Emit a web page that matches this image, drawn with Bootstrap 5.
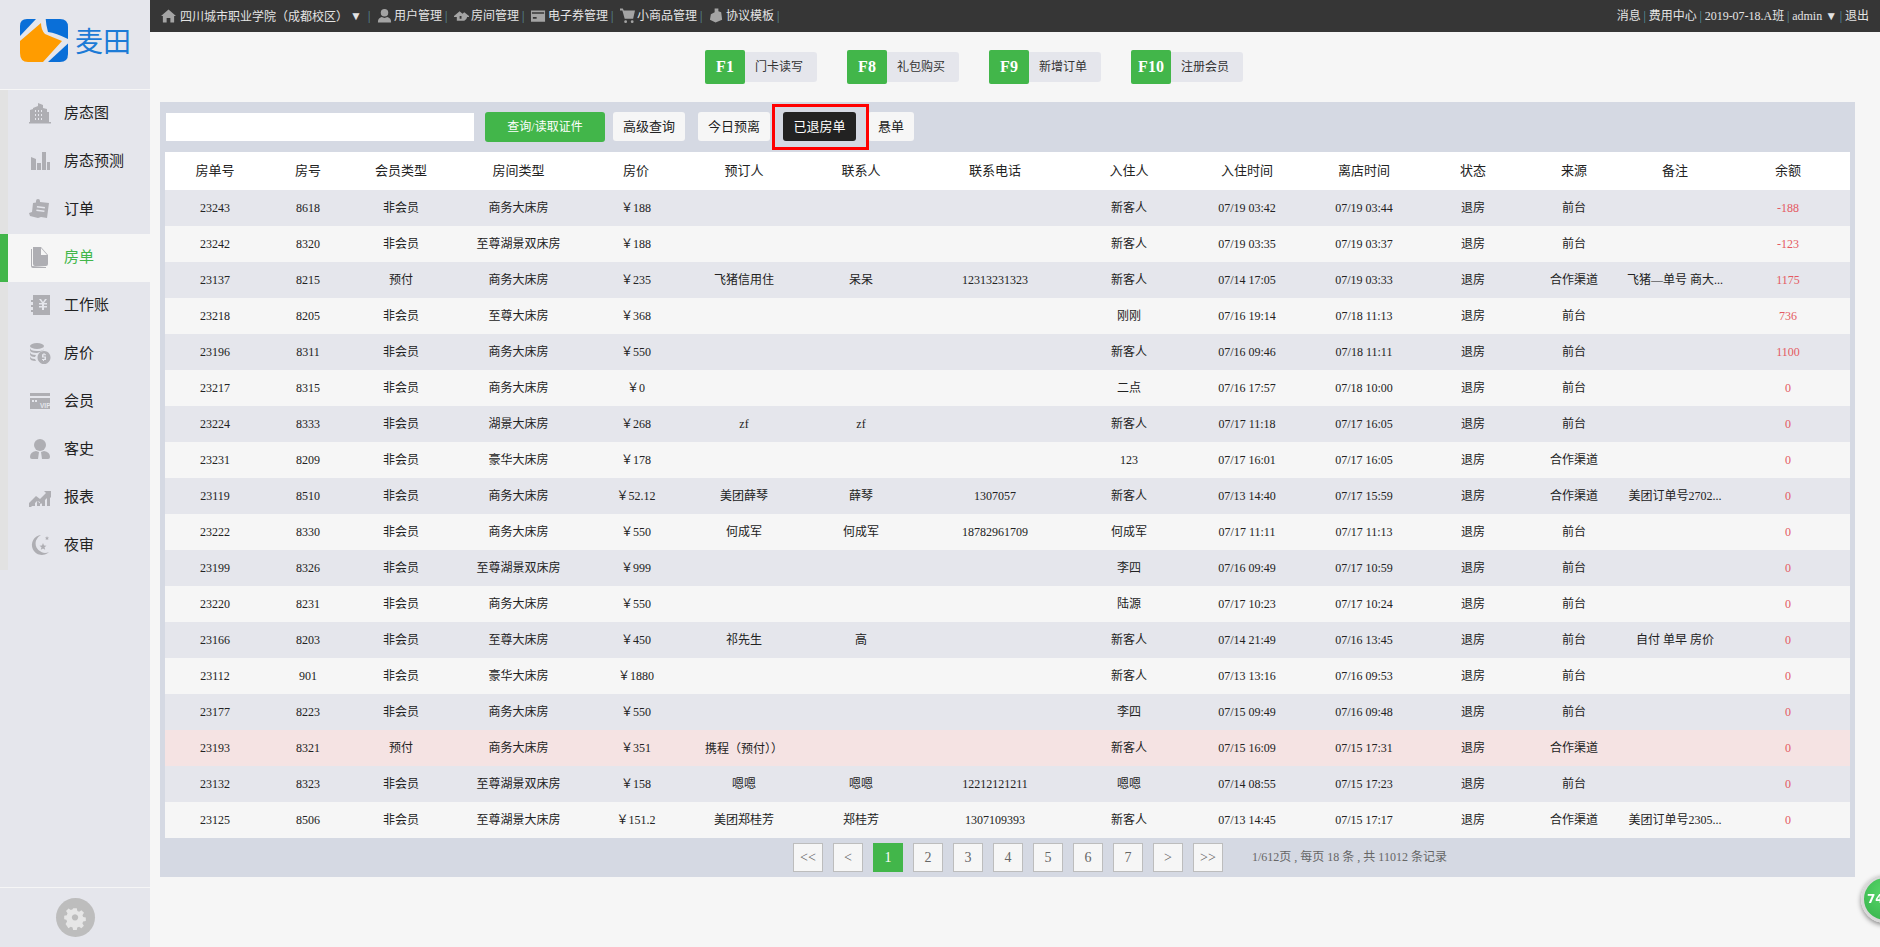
<!DOCTYPE html>
<html lang="zh-CN">
<head>
<meta charset="utf-8">
<title>麦田</title>
<link href="https://cdn.jsdelivr.net/npm/bootstrap@5.3.0/dist/css/bootstrap.min.css" rel="stylesheet">
<style>
html,body{height:100%}
body{background:#f6f6f6;font-family:"Liberation Serif","Noto Sans CJK SC",serif;font-size:12px;color:#222;overflow:hidden;min-width:1880px}
.side{width:150px;height:947px;background:#e5e6ec;flex:0 0 150px}
.brand{height:90px;border-bottom:1px solid #f6f6f6;padding:19px 0 0 20px;gap:7px}
.brand-name{font-family:"Noto Sans CJK SC",sans-serif;font-size:28px;line-height:43px;color:#1c7bd6;letter-spacing:0}
.menu-box{width:150px}
.menu-row{height:48px;border-left:8px solid #e2e2e2;padding-left:21px;font-size:15px;color:#222;text-decoration:none;gap:13px;font-family:"Noto Sans CJK SC",sans-serif}
.menu-row svg{width:22px;height:22px;fill:#aeaeb3;flex:0 0 22px;margin-bottom:2px}
.menu-row span{margin-bottom:4px}
.menu-row.on{background:#f6f6f6;border-left-color:#42b64a;color:#42b64a}
.side-foot{height:60px;border-top:1px solid #f6f6f6;margin-top:auto}
.gear{width:39px;height:39px;border-radius:50%;background:#bdbdbd}
.main-col{width:1730px}
.topline{height:32px;background:#363636;color:#e4e4e4;padding:0 11px;font-size:12px;white-space:nowrap}
.topline svg{width:15px;height:16px;fill:#a4a4a4;margin-right:2px;flex:0 0 15px}
.sep{color:#5d9aa8;margin:0 6.6px 0 3px}
.sep-r{color:#5d9aa8;margin:0 2.75px}
.home-name{margin-left:2px}
.arrow{margin:0 3px 0 2px;font-size:12px}
.punc{font-family:"Noto Sans CJK TC",sans-serif}
.fn-row{height:70px;padding-left:555px;gap:30px}
.fn-key{width:40px;height:34px;background:#42b64a;color:#fff;font-weight:700;font-size:16px;border-radius:2px}
.fn-name{width:72px;height:30px;background:#e5e6ec;font-size:12px;border-radius:0 3px 3px 0;color:#333;padding-right:4px}
.sheet{width:1695px;margin-left:10px;background:#d5d9e3}
.tools{height:50px;padding:10px 0 0 6px}
.tools input{width:308px;height:28px;border:0;background:#fff;border-radius:0;padding:0 6px;font-size:12px;margin-top:1px}
.act{height:29px;padding:0;font-size:13px;line-height:29px;border:0;border-radius:3px;background:#f6f6f6;color:#222;width:72px;font-family:inherit}
.act:hover{background:#f6f6f6;color:#222}
.act-go{width:120px;height:30px;background:#42b64a;color:#fff;margin-left:11px;font-size:12px}
.act-go:hover{background:#42b64a;color:#fff}
.ml8{margin-left:8px}.ml13{margin-left:13px}.ml12{margin-left:12px}
.act-dark{width:73px;background:#222;color:#fff}
.act-dark:hover{background:#222;color:#fff}
.act-short{width:46px}
.redbox{position:absolute;left:-11px;top:-8px;width:97px;height:46px;border:3px solid #f00;pointer-events:none}
.table-wrap{margin:0 5px}
table.grid{table-layout:fixed;width:1685px;margin:0;border-collapse:collapse;font-size:12px}
.grid th,.grid td{padding:0;border:0;text-align:center;vertical-align:middle;white-space:nowrap;color:#222;box-shadow:none;font-weight:400}
.grid th{height:38px;background:#fff;font-size:13px}
.grid td{height:36px;background:#f6f6f6}
.grid tbody tr:nth-child(odd) td{background:#e5e6ec}
.grid tbody tr.warn td{background:#f5e3e3}
.grid td.money{color:#e45a62}
.pager{height:39px;padding:5px 0 0 633px;gap:10px}
.pg{width:30px;height:29px;border:1px solid #bdbdbd;background:#f6f6f6;color:#666;font-size:14px;text-decoration:none;line-height:1}
.pg.on{background:#42b64a;border-color:#42b64a;color:#fff}
.pg-info{margin-left:19px;color:#666;font-size:12px;line-height:29px}
.ball{position:fixed;left:1861px;top:875px;width:48px;height:48px;border-radius:50%;border:3px solid #d8d8d8;background:radial-gradient(circle at 50% 35%,#58d86a,#35b04a);box-shadow:0 2px 5px rgba(0,0,0,.45);color:#fff;font:700 12px "DejaVu Sans",sans-serif;padding-left:3px}
</style>
</head>
<body class="d-flex">
<aside class="side d-flex flex-column">
  <div class="brand d-flex align-items-start">
    <svg width="48" height="43" viewBox="0 0 48 43">
      <path d="M0 17V7Q0 0 7 0H16Z" fill="#0a6fd8"/>
      <path d="M25.700 0H40Q48 0 48 8V20Q36 14 28 13Q26 6 25.700 0Z" fill="#0a6fd8"/>
      <path d="M48 24.500V35Q48 43 40 43H28Z" fill="#0a6fd8"/>
      <path d="M0 22L21 4Q21 11 25 15Q32 18 42 22L23 43H8Q0 43 0 34Z" fill="#ff9c00"/>
    </svg>
    <span class="brand-name">麦田</span>
  </div>
  <nav class="menu-box d-flex flex-column">
    <a href="#" class="menu-row d-flex align-items-center"><svg viewBox="0 0 22 22"><path d="M1 20V8l3-1v-1l5-2V1l5 2v3l4 1v3h2v10h2v1.500H0V20zM6 8v2h1V8zm3 0v2h1V8zm3 0v2h1V8zM6 12v2h1v-2zm3 0v2h1v-2zm3 0v2h1v-2zM6 16v2h1v-2zm3 0v2h1v-2zm3 0v2h1v-2z" fill-rule="evenodd"/></svg><span>房态图</span></a>
    <a href="#" class="menu-row d-flex align-items-center"><svg viewBox="0 0 22 22"><path d="M2 7l5 2v11H2zM8 13h4v7H8zM13 2h4v18h-4zM18 12h3v8h-3z"/></svg><span>房态预测</span></a>
    <a href="#" class="menu-row d-flex align-items-center"><svg viewBox="0 0 22 22"><path d="M9 1a2 2 0 0 1 2 2v1l9 1-2 15-6-1-3 1-8-2-1-3 3-1 1-9 3-.5V3a2 2 0 0 1 2-2zM8 8l-.2 1.500 8 1 .2-1.500zM7.500 11.500l-.2 1.500 8 1 .2-1.500z" fill-rule="evenodd"/></svg><span>订单</span></a>
    <a href="#" class="menu-row on d-flex align-items-center"><svg viewBox="0 0 22 22"><path d="M4 1h8l7 8v9a2 2 0 0 1-2 2H6a2 2 0 0 1-2-2zM12 2v7h6z M2 3h1v17l14 1v1H4a2 2 0 0 1-2-2z" fill-rule="evenodd"/></svg><span>房单</span></a>
    <a href="#" class="menu-row d-flex align-items-center"><svg viewBox="0 0 22 22"><path d="M4 1h17v20H4v-3H2v-2h2v-3H2v-2h2V8H2V6h2zm6 4 3 4h-3v1.500h3V12h-3v1.500h3V16h2v-2.500h3V12h-3v-1.500h3V9h-3l3-4h-2l-2 3-2-3z" fill-rule="evenodd"/></svg><span>工作账</span></a>
    <a href="#" class="menu-row d-flex align-items-center"><svg viewBox="0 0 22 22"><ellipse cx="8" cy="4" rx="7" ry="3"/><path d="M1 6q0 3 7 3t7-2v1q-6 3-7 3-7 0-7-3zM1 10q0 3 6 3l-1 2q-5 0-5-3zM1 14q0 3 5 3l1 2q-6 0-6-3z"/><path d="M15 9a6.500 6.500 0 1 0 .01 0zM14.500 11h1v1.200h1.500v1h-2.500v1.300h2.500V18h-2v1h-1v-1H13v-1h2.500v-1.500H13V12.200h1.500z" fill-rule="evenodd"/></svg><span>房价</span></a>
    <a href="#" class="menu-row d-flex align-items-center"><svg viewBox="0 0 22 22"><path d="M1 3h20v3H1zM1 8h20v11H1zM3 10v2h2v-2zm3 0v2h2v-2z" fill-rule="evenodd"/><text x="11" y="17.500" font-size="6.500" font-weight="700" fill="#e5e6ec" font-family="Liberation Sans">VIP</text></svg><span>会员</span></a>
    <a href="#" class="menu-row d-flex align-items-center"><svg viewBox="0 0 22 22"><circle cx="11" cy="7" r="6"/><path d="M1 19q0-5 6-6l3 1-1 7H3q-2 0-2-2zM21 19q0-5-6-6l-3 1 1 7h6q2 0 2-2z"/></svg><span>客史</span></a>
    <a href="#" class="menu-row d-flex align-items-center"><svg viewBox="0 0 22 22"><path d="M0 17l7-7 4 3 6-6-2-2h7v7l-2-2-8 8-4-3-6 6H0zM3 20l3-3v3zM8 15v5h3v-4zM13 16l3-3v7h-3zM18 11l3-3v12h-3z"/></svg><span>报表</span></a>
    <a href="#" class="menu-row d-flex align-items-center"><svg viewBox="0 0 22 22"><path d="M12 1A10 10 0 1 0 20 18 9 9 0 0 1 12 1z"/><path d="M14 9l1 2.500 2.500.2-2 1.600.7 2.500-2.200-1.400-2.200 1.400.7-2.500-2-1.600 2.500-.2zM18 2l.6 1.400 1.400.2-1 1 .3 1.400-1.300-.7-1.300.7.3-1.400-1-1 1.400-.2z"/></svg><span>夜审</span></a>
  </nav>
  <div class="side-foot d-flex align-items-center justify-content-center mt-auto">
    <div class="gear d-flex align-items-center justify-content-center">
      <svg width="24" height="24" viewBox="0 0 24 24"><path fill="#e6e6e6" fill-rule="evenodd" d="M10 2h4l.6 3 2 .9 2.600-1.700 2.800 2.800-1.700 2.600.8 2 2.900.6v4l-3 .6-.8 2 1.700 2.600-2.800 2.800-2.600-1.700-2 .8-.6 3h-4l-.6-3-2-.8-2.600 1.700L1.500 19.400l1.700-2.600-.8-2L0 14.200v-4l2.900-.6.8-2L2 5l2.800-2.800 2.600 1.700 2-.9zM12 8.500a3.500 3.500 0 1 0 .01 0z" transform="translate(1.200 .5) scale(.9)"/></svg>
    </div>
  </div>
</aside>
<div class="main-col">
  <header class="topline d-flex align-items-center justify-content-between">
    <div class="d-flex align-items-center">
      <svg viewBox="0 0 16 16"><path d="M8 1l8 7h-2v7h-4v-5H6v5H2V8H0z"/></svg>
      <span class="home-name">四川城市职业学院<span class="punc" lang="zh-TW">（</span>成都校区<span class="punc" lang="zh-TW">）</span></span><span class="arrow">▼</span><span class="sep">|</span>
      <svg viewBox="0 0 16 16"><circle cx="8" cy="4.500" r="4"/><path d="M1 14q0-4 4-5l3 1 3-1q4 1 4 5v1H1z"/></svg><span>用户管理</span><span class="sep">|</span>
      <svg viewBox="0 0 16 16"><path d="M0 8l6-5 3 2.500 2-1.500 5 4v1l-2 0a5 5 0 0 1-3 4H3V9H0zM6 8v3h2V8z" fill-rule="evenodd"/></svg><span>房间管理</span><span class="sep">|</span>
      <svg viewBox="0 0 16 16"><path fill-rule="evenodd" d="M0 2h15v12H0zM1 4v1.500h13V4zM2 9v2h4V9z"/></svg><span>电子券管理</span><span class="sep">|</span>
      <svg viewBox="0 0 16 16"><path d="M0 0h3l1 2h12l-2 9H5L2.500 2H0z"/><circle cx="6" cy="14" r="1.500"/><circle cx="13" cy="14" r="1.500"/></svg><span>小商品管理</span><span class="sep">|</span>
      <svg viewBox="0 0 16 16"><path d="M6 0h4v3l3 1 1 8-7 3-6-3 1-6 4-2z"/></svg><span>协议模板</span><span class="sep">|</span>
    </div>
    <div class="d-flex align-items-center">
      <span>消息</span><span class="sep-r">|</span><span>费用中心</span><span class="sep-r">|</span><span>2019-07-18.A班</span><span class="sep-r">|</span><span>admin ▼</span><span class="sep-r">|</span><span>退出</span>
    </div>
  </header>
  <div class="fn-row d-flex align-items-center">
    <div class="d-flex align-items-center"><span class="fn-key d-flex align-items-center justify-content-center">F1</span><span class="fn-name d-flex align-items-center justify-content-center">门卡读写</span></div>
    <div class="d-flex align-items-center"><span class="fn-key d-flex align-items-center justify-content-center">F8</span><span class="fn-name d-flex align-items-center justify-content-center">礼包购买</span></div>
    <div class="d-flex align-items-center"><span class="fn-key d-flex align-items-center justify-content-center">F9</span><span class="fn-name d-flex align-items-center justify-content-center">新增订单</span></div>
    <div class="d-flex align-items-center"><span class="fn-key d-flex align-items-center justify-content-center">F10</span><span class="fn-name d-flex align-items-center justify-content-center">注册会员</span></div>
  </div>
  <section class="sheet">
    <div class="tools d-flex align-items-start">
      <input type="text" aria-label="查询">
      <button class="btn act act-go">查询/读取证件</button>
      <button class="btn act ml8">高级查询</button>
      <button class="btn act ml13">今日预离</button>
      <div class="position-relative ml13"><button class="btn act act-dark d-block">已退房单</button><span class="redbox"></span></div>
      <button class="btn act act-short ml12">悬单</button>
    </div>
    <div class="table-wrap">
      <table class="table grid">
        <colgroup><col style="width:100px"><col style="width:86px"><col style="width:100px"><col style="width:135px"><col style="width:100px"><col style="width:116px"><col style="width:118px"><col style="width:150px"><col style="width:118px"><col style="width:118px"><col style="width:116px"><col style="width:102px"><col style="width:100px"><col style="width:102px"><col style="width:124px"></colgroup>
        <thead><tr><th>房单号</th><th>房号</th><th>会员类型</th><th>房间类型</th><th>房价</th><th>预订人</th><th>联系人</th><th>联系电话</th><th>入住人</th><th>入住时间</th><th>离店时间</th><th>状态</th><th>来源</th><th>备注</th><th>余额</th></tr></thead>
        <tbody>
<tr><td>23243</td><td>8618</td><td>非会员</td><td>商务大床房</td><td>￥188</td><td></td><td></td><td></td><td>新客人</td><td>07/19 03:42</td><td>07/19 03:44</td><td>退房</td><td>前台</td><td></td><td class="money">-188</td></tr>
<tr><td>23242</td><td>8320</td><td>非会员</td><td>至尊湖景双床房</td><td>￥188</td><td></td><td></td><td></td><td>新客人</td><td>07/19 03:35</td><td>07/19 03:37</td><td>退房</td><td>前台</td><td></td><td class="money">-123</td></tr>
<tr><td>23137</td><td>8215</td><td>预付</td><td>商务大床房</td><td>￥235</td><td>飞猪信用住</td><td>呆呆</td><td>12313231323</td><td>新客人</td><td>07/14 17:05</td><td>07/19 03:33</td><td>退房</td><td>合作渠道</td><td>飞猪—单号 商大...</td><td class="money">1175</td></tr>
<tr><td>23218</td><td>8205</td><td>非会员</td><td>至尊大床房</td><td>￥368</td><td></td><td></td><td></td><td>刚刚</td><td>07/16 19:14</td><td>07/18 11:13</td><td>退房</td><td>前台</td><td></td><td class="money">736</td></tr>
<tr><td>23196</td><td>8311</td><td>非会员</td><td>商务大床房</td><td>￥550</td><td></td><td></td><td></td><td>新客人</td><td>07/16 09:46</td><td>07/18 11:11</td><td>退房</td><td>前台</td><td></td><td class="money">1100</td></tr>
<tr><td>23217</td><td>8315</td><td>非会员</td><td>商务大床房</td><td>￥0</td><td></td><td></td><td></td><td>二点</td><td>07/16 17:57</td><td>07/18 10:00</td><td>退房</td><td>前台</td><td></td><td class="money">0</td></tr>
<tr><td>23224</td><td>8333</td><td>非会员</td><td>湖景大床房</td><td>￥268</td><td>zf</td><td>zf</td><td></td><td>新客人</td><td>07/17 11:18</td><td>07/17 16:05</td><td>退房</td><td>前台</td><td></td><td class="money">0</td></tr>
<tr><td>23231</td><td>8209</td><td>非会员</td><td>豪华大床房</td><td>￥178</td><td></td><td></td><td></td><td>123</td><td>07/17 16:01</td><td>07/17 16:05</td><td>退房</td><td>合作渠道</td><td></td><td class="money">0</td></tr>
<tr><td>23119</td><td>8510</td><td>非会员</td><td>商务大床房</td><td>￥52.12</td><td>美团薛琴</td><td>薛琴</td><td>1307057</td><td>新客人</td><td>07/13 14:40</td><td>07/17 15:59</td><td>退房</td><td>合作渠道</td><td>美团订单号2702...</td><td class="money">0</td></tr>
<tr><td>23222</td><td>8330</td><td>非会员</td><td>商务大床房</td><td>￥550</td><td>何成军</td><td>何成军</td><td>18782961709</td><td>何成军</td><td>07/17 11:11</td><td>07/17 11:13</td><td>退房</td><td>前台</td><td></td><td class="money">0</td></tr>
<tr><td>23199</td><td>8326</td><td>非会员</td><td>至尊湖景双床房</td><td>￥999</td><td></td><td></td><td></td><td>李四</td><td>07/16 09:49</td><td>07/17 10:59</td><td>退房</td><td>前台</td><td></td><td class="money">0</td></tr>
<tr><td>23220</td><td>8231</td><td>非会员</td><td>商务大床房</td><td>￥550</td><td></td><td></td><td></td><td>陆源</td><td>07/17 10:23</td><td>07/17 10:24</td><td>退房</td><td>前台</td><td></td><td class="money">0</td></tr>
<tr><td>23166</td><td>8203</td><td>非会员</td><td>至尊大床房</td><td>￥450</td><td>祁先生</td><td>高</td><td></td><td>新客人</td><td>07/14 21:49</td><td>07/16 13:45</td><td>退房</td><td>前台</td><td>自付 单早 房价</td><td class="money">0</td></tr>
<tr><td>23112</td><td>901</td><td>非会员</td><td>豪华大床房</td><td>￥1880</td><td></td><td></td><td></td><td>新客人</td><td>07/13 13:16</td><td>07/16 09:53</td><td>退房</td><td>前台</td><td></td><td class="money">0</td></tr>
<tr><td>23177</td><td>8223</td><td>非会员</td><td>商务大床房</td><td>￥550</td><td></td><td></td><td></td><td>李四</td><td>07/15 09:49</td><td>07/16 09:48</td><td>退房</td><td>前台</td><td></td><td class="money">0</td></tr>
<tr class="warn"><td>23193</td><td>8321</td><td>预付</td><td>商务大床房</td><td>￥351</td><td>携程<span class="punc" lang="zh-TW">（</span>预付<span class="punc" lang="zh-TW">））</span></td><td></td><td></td><td>新客人</td><td>07/15 16:09</td><td>07/15 17:31</td><td>退房</td><td>合作渠道</td><td></td><td class="money">0</td></tr>
<tr><td>23132</td><td>8323</td><td>非会员</td><td>至尊湖景双床房</td><td>￥158</td><td>嗯嗯</td><td>嗯嗯</td><td>12212121211</td><td>嗯嗯</td><td>07/14 08:55</td><td>07/15 17:23</td><td>退房</td><td>前台</td><td></td><td class="money">0</td></tr>
<tr><td>23125</td><td>8506</td><td>非会员</td><td>至尊湖景大床房</td><td>￥151.2</td><td>美团郑桂芳</td><td>郑桂芳</td><td>1307109393</td><td>新客人</td><td>07/13 14:45</td><td>07/15 17:17</td><td>退房</td><td>合作渠道</td><td>美团订单号2305...</td><td class="money">0</td></tr>
        </tbody>
      </table>
    </div>
    <div class="pager d-flex align-items-start">
      <a href="#" class="pg d-flex align-items-center justify-content-center">&lt;&lt;</a>
      <a href="#" class="pg d-flex align-items-center justify-content-center">&lt;</a>
      <a href="#" class="pg on d-flex align-items-center justify-content-center">1</a>
      <a href="#" class="pg d-flex align-items-center justify-content-center">2</a>
      <a href="#" class="pg d-flex align-items-center justify-content-center">3</a>
      <a href="#" class="pg d-flex align-items-center justify-content-center">4</a>
      <a href="#" class="pg d-flex align-items-center justify-content-center">5</a>
      <a href="#" class="pg d-flex align-items-center justify-content-center">6</a>
      <a href="#" class="pg d-flex align-items-center justify-content-center">7</a>
      <a href="#" class="pg d-flex align-items-center justify-content-center">&gt;</a>
      <a href="#" class="pg d-flex align-items-center justify-content-center">&gt;&gt;</a>
      <span class="pg-info">1/612页 , 每页 18 条 , 共 11012 条记录</span>
    </div>
  </section>
</div>
<div class="ball d-flex align-items-center">74</div>
<script src="https://cdn.jsdelivr.net/npm/bootstrap@5.3.0/dist/js/bootstrap.bundle.min.js"></script>
</body>
</html>
